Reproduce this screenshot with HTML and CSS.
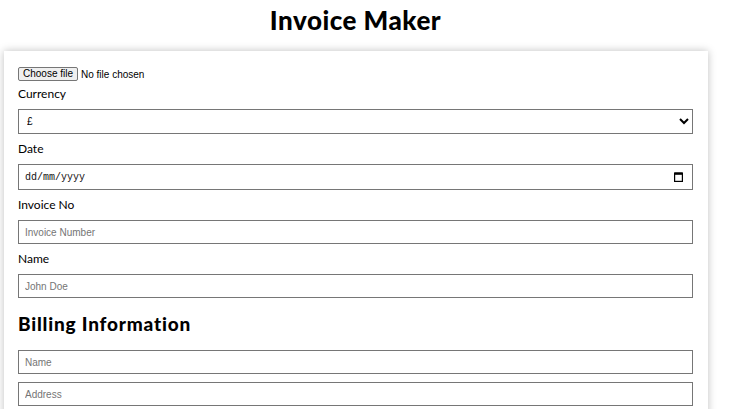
FILE: index.html
```html
<!DOCTYPE html>
<html lang="en-GB">
<head>
<meta charset="utf-8">
<link rel="stylesheet" href="styles.css">
</head>
<body>
<h1 class="title">Invoice Maker</h1>
<div class="card">
  <div class="file">
    <button class="file-btn" type="button">Choose file</button>
    <span class="file-name">No file chosen</span>
  </div>
  <label class="label">Currency</label>
  <select class="field select"><option>£</option></select>
  <label class="label">Date</label>
  <div class="field date">
    <span class="date-text">dd/mm/yyyy</span>
    <svg class="cal" width="9" height="10" viewBox="0 0 9 10"><rect x="0.6" y="1.1" width="7.8" height="8.3" fill="none" stroke="#000" stroke-width="1.2"/><rect x="0.6" y="0.5" width="7.8" height="2.3" fill="#000"/></svg>
  </div>
  <label class="label">Invoice No</label>
  <input type="text" class="field" placeholder="Invoice Number">
  <label class="label">Name</label>
  <input type="text" class="field" placeholder="John Doe">
  <h2 class="section">Billing Information</h2>
  <div class="group">
    <input type="text" class="field" placeholder="Name">
    <input type="text" class="field" placeholder="Address">
  </div>
</div>
</body>
</html>
```
FILE: styles.css
```css
html, body { margin: 0; padding: 0; background: #fff; overflow: hidden; }
body { font-family: "Lato", "DejaVu Sans", sans-serif; color: #000; }
.title { text-align: center; font-size: 26px; font-weight: 900; letter-spacing: 0.5px; margin: 4px 0 0 -20px; height: 47px; line-height: 32px; }
.card { margin-left: 4px; width: 704px; box-sizing: border-box; padding: 16px 15px 14px 14px; box-shadow: 0 0 8px rgba(0,0,0,0.25); display: flex; flex-direction: column; }
.file { display: flex; align-items: center; gap: 3px; font-family: "Liberation Sans", Arial, sans-serif; font-size: 10px; height: 14px; margin-bottom: -2px; }
.file-btn { font-family: "Liberation Sans", Arial, sans-serif; font-size: 10px; height: 14px; line-height: 12px; padding: 0 4px; border: 1px solid #767676; border-radius: 2px; background: #efefef; color: #000; }
.label { font-size: 12px; margin: 7px 0 7px; line-height: 16px; }
.field { box-sizing: border-box; width: 675px; height: 24px; border: 1px solid #767676; border-radius: 0; font-family: "Liberation Sans", Arial, sans-serif; font-size: 10px; padding: 0 6px; background: #fff; margin: 0; color: #000; }
.field::placeholder { color: #757575; }
.select { height: 25px; padding-left: 4px; }
.date { height: 26px; display: flex; align-items: center; justify-content: space-between; padding: 0 9px 0 6px; }
.date-text { font-family: "Liberation Mono", "DejaVu Sans Mono", monospace; font-size: 10px; color: #111; }
.section { font-size: 19px; font-weight: 900; letter-spacing: 0.8px; margin: 15px 0 15px; line-height: 22px; }
.group { display: flex; flex-direction: column; gap: 8px; }
```
